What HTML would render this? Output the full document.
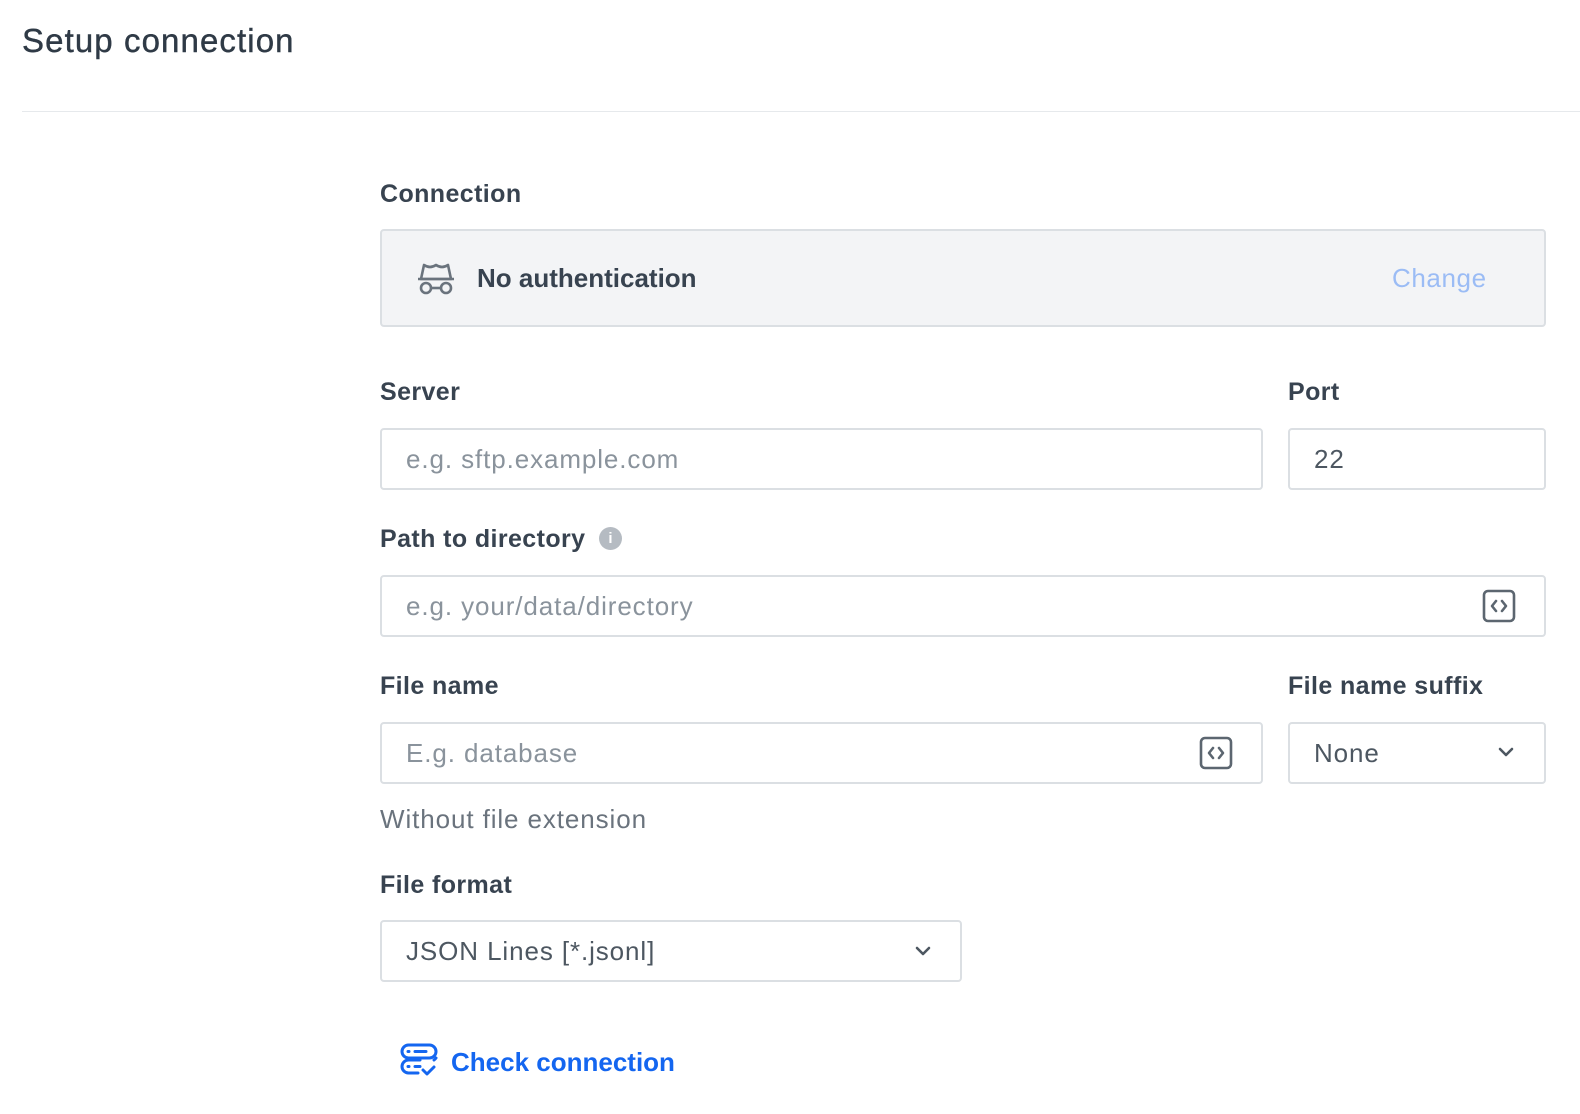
<!DOCTYPE html>
<html><head><style>
*{box-sizing:border-box;margin:0;padding:0}
body{width:1580px;height:1114px;background:#fff;font-family:"Liberation Sans",sans-serif;color:#384350;position:relative;overflow:hidden}
.a{position:absolute}
.t{left:22px;top:22px;font-size:33px;letter-spacing:1.1px;color:#2f3a46;-webkit-text-stroke:0.4px #2f3a46}
.hr{left:22px;top:111px;width:1558px;height:1px;background:#e6e9ec}
.lbl{font-size:25px;font-weight:bold;color:#384350;letter-spacing:0.4px}
.in{border:2px solid #dbdfe3;border-radius:4px;background:#fff;font-size:26px;letter-spacing:0.9px;color:#8a939c;padding-left:24px;display:flex;align-items:center}
.v{color:#4d5761}
</style></head><body>
<div class="a t">Setup connection</div>
<div class="a hr"></div>
<div class="a lbl" style="left:380px;top:180px">Connection</div>
<div class="a" style="left:380px;top:229px;width:1166px;height:98px;background:#f3f4f6;border:2px solid #dbdfe3;border-radius:4px"></div>
<svg class="a" style="left:416px;top:260px" width="40" height="36" viewBox="0 0 40 36" fill="none" stroke="#6a737d" stroke-width="2.6" stroke-linejoin="round"><path d="M5 19 L8 5 Q14 9 20 5 Q26 9 32 5 L35 19 Z"/><path d="M2 19 H38"/><circle cx="10" cy="28" r="5"/><circle cx="30" cy="28" r="5"/><path d="M15 28 H25"/></svg>
<div class="a" style="left:477px;top:263px;font-size:26px;font-weight:bold;color:#384350">No authentication</div>
<div class="a" style="left:1392px;top:263px;font-size:26px;letter-spacing:0.6px;color:#9bbcf5">Change</div>

<div class="a lbl" style="left:380px;top:378px">Server</div>
<div class="a lbl" style="left:1288px;top:378px">Port</div>
<div class="a in" style="left:380px;top:428px;width:883px;height:62px">e.g. sftp.example.com</div>
<div class="a in v" style="left:1288px;top:428px;width:258px;height:62px">22</div>

<div class="a lbl" style="left:380px;top:525px">Path to directory</div>
<div class="a" style="left:599px;top:527px;width:23px;height:23px;border-radius:50%;background:#b5bbc2;color:#fff;font-size:15px;font-weight:bold;text-align:center;line-height:23px">i</div>
<div class="a in" style="left:380px;top:575px;width:1166px;height:62px">e.g. your/data/directory</div>
<svg class="a" style="left:1482px;top:589px" width="34" height="34" viewBox="0 0 34 34" fill="none" stroke="#5c6670" stroke-width="2.6" stroke-linecap="round" stroke-linejoin="round"><rect x="2" y="2" width="30" height="30" rx="4"/><path d="M14 12 L10 17 L14 22 M20 12 L24 17 L20 22"/></svg>

<div class="a lbl" style="left:380px;top:672px">File name</div>
<div class="a lbl" style="left:1288px;top:672px">File name suffix</div>
<div class="a in" style="left:380px;top:722px;width:883px;height:62px">E.g. database</div>
<svg class="a" style="left:1199px;top:736px" width="34" height="34" viewBox="0 0 34 34" fill="none" stroke="#5c6670" stroke-width="2.6" stroke-linecap="round" stroke-linejoin="round"><rect x="2" y="2" width="30" height="30" rx="4"/><path d="M14 12 L10 17 L14 22 M20 12 L24 17 L20 22"/></svg>
<div class="a in v" style="left:1288px;top:722px;width:258px;height:62px">None</div>
<svg class="a" style="left:1497px;top:745px" width="18" height="14" viewBox="0 0 18 14" fill="none" stroke="#4d5761" stroke-width="2.6" stroke-linecap="round" stroke-linejoin="round"><path d="M3 4 L9 10 L15 4"/></svg>
<div class="a" style="left:380px;top:804px;font-size:26px;letter-spacing:0.9px;color:#6a737d">Without file extension</div>

<div class="a lbl" style="left:380px;top:871px">File format</div>
<div class="a in v" style="left:380px;top:920px;width:582px;height:62px">JSON Lines [*.jsonl]</div>
<svg class="a" style="left:914px;top:944px" width="18" height="14" viewBox="0 0 18 14" fill="none" stroke="#4d5761" stroke-width="2.6" stroke-linecap="round" stroke-linejoin="round"><path d="M3 4 L9 10 L15 4"/></svg>

<svg class="a" style="left:400px;top:1043px" width="40" height="36" viewBox="0 0 40 36" fill="none" stroke="#1466f0" stroke-width="3" stroke-linecap="round" stroke-linejoin="round"><rect x="2" y="2" width="34" height="13" rx="6.5"/><path d="M20 17 H8.5 A6.5 6.5 0 0 0 8.5 30 H18"/><path d="M8 8.5 H9 M15 8.5 H26 M8 23.5 H9 M15 23.5 H20"/><path d="M36 15 A6.5 6.5 0 0 1 34 17"/><path d="M23 27 L27 31 L34 24"/></svg>
<div class="a" style="left:451px;top:1047px;font-size:26px;font-weight:bold;color:#1466f0">Check connection</div>
</body></html>
